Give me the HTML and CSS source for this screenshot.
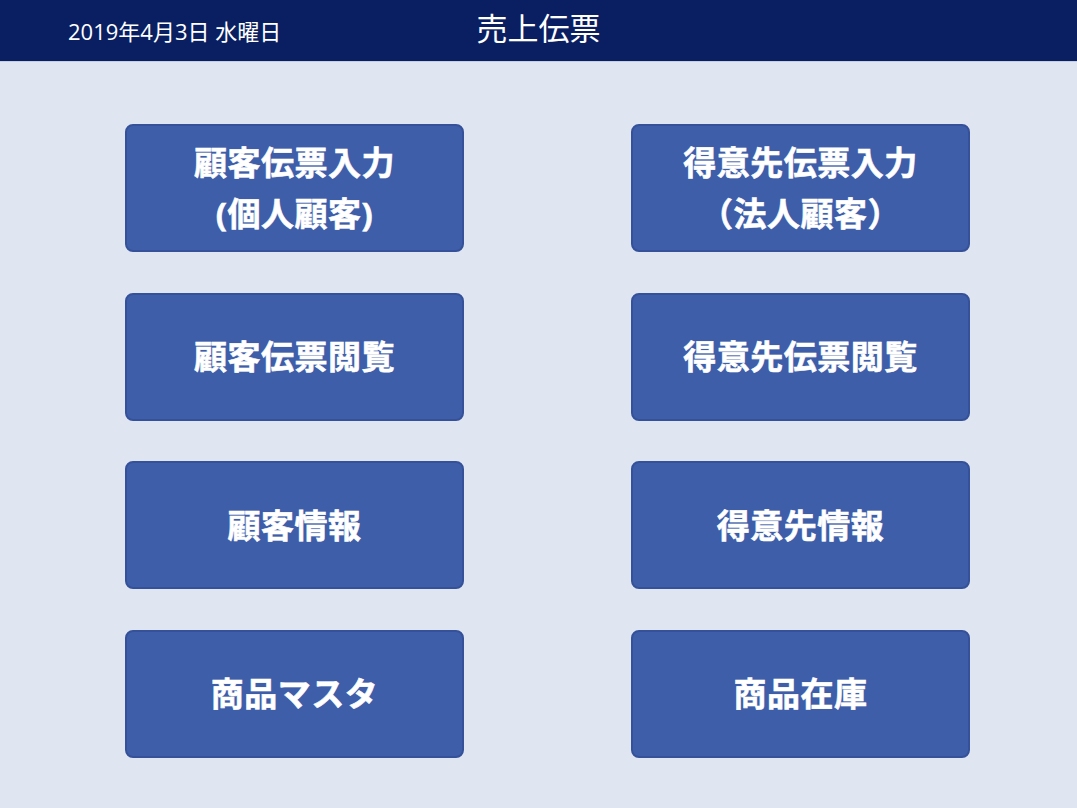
FILE: index.html
```html
<!DOCTYPE html>
<html lang="ja">
<head>
<meta charset="utf-8">
<title>売上伝票</title>
<link rel="stylesheet" href="styles.css">
</head>
<body>
<header class="topbar">
  <div class="date">2019年4月3日 水曜日</div>
  <div class="title">売上伝票</div>
</header>
<main class="menu">
  <button class="tile">顧客伝票入力<br>(個人顧客)</button>
  <button class="tile">得意先伝票入力<br>（法人顧客）</button>
  <button class="tile">顧客伝票閲覧</button>
  <button class="tile">得意先伝票閲覧</button>
  <button class="tile">顧客情報</button>
  <button class="tile">得意先情報</button>
  <button class="tile">商品マスタ</button>
  <button class="tile">商品在庫</button>
</main>
</body>
</html>
```
FILE: styles.css
```css
html, body {
  margin: 0;
  padding: 0;
}
body {
  width: 1077px;
  height: 808px;
  background: #dfe5f1;
  font-family: "Open Sans", "Noto Sans CJK JP", sans-serif;
  overflow: hidden;
}
.topbar {
  position: relative;
  height: 61px;
  background: #0a1f62;
  border-bottom: 1px solid #c7cee0;
  color: #ffffff;
  display: flex;
  align-items: center;
}
.date {
  padding-left: 68px;
  font-size: 22px;
  line-height: 1;
  margin-top: 1px;
}
.title {
  position: absolute;
  left: 0;
  right: 0;
  top: 11px;
  text-align: center;
  font-size: 31px;
  line-height: 34px;
}
.menu {
  display: grid;
  grid-template-columns: 339px 339px;
  grid-auto-rows: 128px;
  column-gap: 167px;
  row-gap: 40.67px;
  padding: 62px 0 0 125px;
}
.tile {
  margin: 0;
  box-sizing: border-box;
  background: #3e5ea9;
  border: 2px solid #34519a;
  border-radius: 8px;
  color: #ffffff;
  font-family: "Open Sans", "Noto Sans CJK JP", sans-serif;
  font-weight: 700;
  font-size: 33px;
  letter-spacing: 0.5px;
  line-height: 51px;
  text-align: center;
  padding: 0;
  cursor: pointer;
  -webkit-text-stroke: 0.6px #ffffff;
}
```
